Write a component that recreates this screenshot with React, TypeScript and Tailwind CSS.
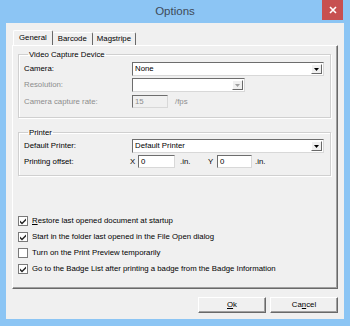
import React from 'react';

const ComboArrow = ({ disabled }: { disabled?: boolean }) => (
  <div className="flex h-[10px] w-[11px] items-center justify-center border border-t-white border-l-white border-r-[#696969] border-b-[#696969] bg-[#f0f0f0]">
    <svg width="5" height="3" viewBox="0 0 5 3">
      <path d="M0 0H5L2.5 3Z" fill={disabled ? '#a0a0a0' : '#000'} />
    </svg>
  </div>
);

const Combo = ({ value, width, disabled }: { value: string; width: string; disabled?: boolean }) => (
  <div className={`flex h-[14px] ${width} items-center justify-between border border-t-[#6d6d6d] border-l-[#6d6d6d] border-r-[#d8d8d8] border-b-[#d8d8d8] bg-white pl-[2px] pr-[1px]`}>
    <span className="leading-none">{value}</span>
    <ComboArrow disabled={disabled} />
  </div>
);

const Field = ({ value, width, disabled }: { value: string; width: string; disabled?: boolean }) => (
  <div className={`flex h-[13px] ${width} items-center border border-t-[#6d6d6d] border-l-[#6d6d6d] border-r-[#d8d8d8] border-b-[#d8d8d8] pl-[2px] ${disabled ? 'bg-[#f0f0f0] text-[#8d8d8d]' : 'bg-white'}`}>
    <span className="leading-none">{value}</span>
  </div>
);

const Check = ({ checked, children }: { checked: boolean; children: React.ReactNode }) => (
  <div className="flex h-[16px] items-center gap-[4px]">
    <div className="flex h-[10px] w-[10px] items-center justify-center border border-[#7a7a7a] bg-white">
      {checked && (
        <svg width="8" height="8" viewBox="0 0 8 8">
          <path d="M1 3.5L3 5.5L7 1.5V3.5L3 7.5L1 5.5Z" fill="#222" />
        </svg>
      )}
    </div>
    <span className="leading-none">{children}</span>
  </div>
);

const Legend = ({ children }: { children: React.ReactNode }) => (
  <legend className="ml-[4px] px-[1px] leading-[9px]">{children}</legend>
);

export default function App() {
  return (
    <div className="flex h-[326px] w-[350px] flex-col bg-[#8cc5f4] font-['Liberation_Sans',Arial,sans-serif] text-[7.8px] text-black">
      <div className="grid h-[23px] grid-cols-[1fr_auto_1fr] items-start">
        <div />
        <span className="mt-[5px] text-[11.5px] leading-[13px] text-[#3e4a58]">Options</span>
        <div className="mr-[7px] flex h-[20px] w-[21px] items-center justify-center justify-self-end bg-[#c75050]">
          <svg width="8" height="8" viewBox="0 0 8 8">
            <path d="M1 1L7 7M7 1L1 7" stroke="#fff" strokeWidth="1.6" />
          </svg>
        </div>
      </div>

      <div className="mx-[6px] mb-[7px] flex flex-1 flex-col bg-[#f0f0f0] px-[6px] pt-[7px] pb-[6px]">
        <div className="flex items-end pl-[1px]">
          <div className="-mb-px flex h-[16px] items-center rounded-t-[2px] border border-b-0 border-t-white border-l-white border-r-[#696969] bg-[#f0f0f0] px-[5px] pb-[1px]">
            General
          </div>
          <div className="flex h-[13px] items-center rounded-t-[2px] border border-b-0 border-t-white border-l-0 border-r-[#696969] px-[5px]">
            Barcode
          </div>
          <div className="flex h-[13px] items-center rounded-t-[2px] border border-b-0 border-t-white border-l-0 border-r-[#696969] px-[4px]">
            Magstripe
          </div>
        </div>

        <div className="flex h-[244px] flex-col border border-t-white border-l-white border-r-[#696969] border-b-[#696969] pl-[5px] pr-[6px] shadow-[inset_-1px_-1px_0_#a0a0a0]">
          <fieldset className="mt-[4px] border border-[#d0d0d0] pl-[5px] pr-[5px] pb-[9px] shadow-[inset_1px_1px_0_white,1px_1px_0_white]">
            <Legend>Video Capture Device</Legend>
            <div className="mt-[3px] flex flex-col gap-[2px]">
              <div className="flex items-center">
                <span className="w-[108px]">Camera:</span>
                <Combo value="None" width="w-[192px]" />
              </div>
              <div className="flex items-center text-[#8d8d8d]">
                <span className="w-[108px]">Resolution:</span>
                <Combo value="" width="w-[113px]" disabled />
              </div>
              <div className="mt-[1px] flex items-center text-[#8d8d8d]">
                <span className="w-[108px]">Camera capture rate:</span>
                <Field value="15" width="w-[36px]" disabled />
                <span className="ml-[7px]">/fps</span>
              </div>
            </div>
          </fieldset>

          <fieldset className="mt-[10px] border border-[#d0d0d0] pl-[5px] pr-[5px] pb-[7px] shadow-[inset_1px_1px_0_white,1px_1px_0_white]">
            <Legend>Printer</Legend>
            <div className="mt-[2px] flex flex-col gap-[2px]">
              <div className="flex items-center">
                <span className="w-[108px]">Default Printer:</span>
                <Combo value="Default Printer" width="w-[192px]" />
              </div>
              <div className="flex items-center">
                <span className="w-[106px]">Printing offset:</span>
                <span className="w-[8px]">X</span>
                <Field value="0" width="w-[37px]" />
                <span className="ml-[5px] w-[28px]">.in.</span>
                <span className="w-[9px]">Y</span>
                <Field value="0" width="w-[35px]" />
                <span className="ml-[3px]">.in.</span>
              </div>
            </div>
          </fieldset>

          <div className="mt-[37px] flex flex-col">
            <Check checked>
              <span className="underline">R</span>estore last opened document at startup
            </Check>
            <Check checked>Start in the folder last opened in the File Open dialog</Check>
            <Check checked={false}>Turn on the Print Preview temporarily</Check>
            <Check checked>Go to the Badge List after printing a badge from the Badge Information</Check>
          </div>
        </div>

        <div className="mt-[8px] flex justify-end gap-[4px]">
          <button className="flex h-[16px] w-[68px] items-center justify-center border border-t-white border-l-white border-r-[#696969] border-b-[#696969] bg-[#f0f0f0] shadow-[inset_-1px_-1px_0_#a0a0a0]">
            <span className="leading-none"><span className="underline">O</span>k</span>
          </button>
          <button className="flex h-[16px] w-[68px] items-center justify-center border border-t-white border-l-white border-r-[#696969] border-b-[#696969] bg-[#f0f0f0] shadow-[inset_-1px_-1px_0_#a0a0a0]">
            <span className="leading-none">Ca<span className="underline">n</span>cel</span>
          </button>
        </div>
      </div>
    </div>
  );
}
